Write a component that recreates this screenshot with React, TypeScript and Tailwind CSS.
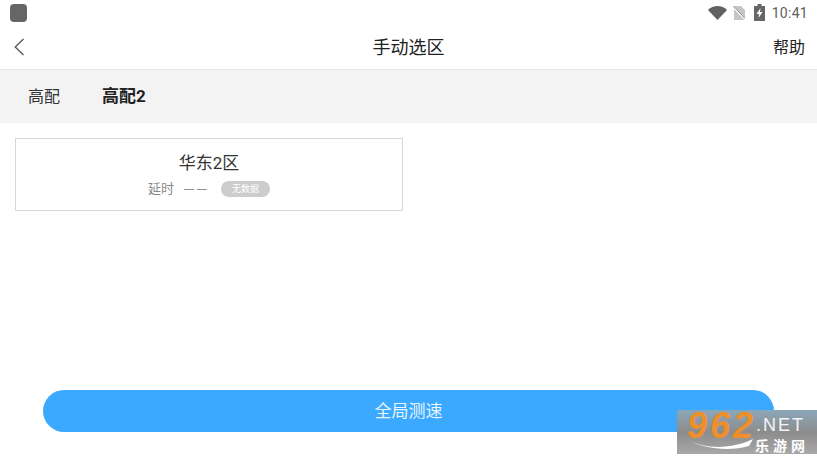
import React from "react";

export default function App() {
  return (
    <div className="relative flex h-[460px] w-[817px] flex-col overflow-hidden bg-white font-['Roboto','Noto_Sans_CJK_SC',sans-serif]">
      {/* status bar */}
      <div className="flex h-[25px] items-center justify-between pl-[10px] pr-[9px]">
        <div className="h-[18px] w-[17px] rounded-[4px] bg-[#666666]" />
        <div className="flex items-center">
          <svg width="19" height="14" viewBox="0 0 19 14" className="mr-[6px]">
            <path d="M0 4 C5 -1.2 14 -1.2 19 4 L9.5 14 Z" fill="#616161" />
          </svg>
          <svg width="12" height="14" viewBox="0 0 12 14" className="mr-[9px]">
            <path d="M1 0 H8 L12 4 V14 H1 Z" fill="#c6c6c6" />
            <path d="M0 0.5 L12 13.5" stroke="#ffffff" strokeWidth="1.6" />
            <path d="M0 -0.5 L12 12.5" stroke="#8a8a8a" strokeWidth="1" />
          </svg>
          <svg width="11" height="17" viewBox="0 0 11 17" className="mr-[7px]">
            <path d="M3.5 0 H7.5 V2 H11 V17 H0 V2 H3.5 Z" fill="#666666" />
            <path d="M6.5 4 L2.5 10 H5 L4.5 14 L8.5 8 H6 Z" fill="#ffffff" />
          </svg>
          <span className="pt-[1px] text-[14px] leading-none tracking-[0.3px] text-[#5f5f5f]">10:41</span>
        </div>
      </div>

      {/* header */}
      <div className="relative flex h-[45px] shrink-0 items-center justify-between border-b border-[#e6e6e6] pl-[14px] pr-[12px]">
        <svg width="10" height="18" viewBox="0 0 10 18" fill="none">
          <path d="M9.5 1 L1.2 9 L9.5 17" stroke="#555555" strokeWidth="1.3" />
        </svg>
        <span className="absolute left-0 right-0 pt-[1px] text-center text-[18px] text-[#222222]">手动选区</span>
        <span className="pt-[1px] text-[16px] text-[#222222]">帮助</span>
      </div>

      {/* tabs */}
      <div className="flex h-[53px] shrink-0 items-center bg-[#f3f3f3] pl-[28px]">
        <span className="text-[16px] text-[#333333]">高配</span>
        <span className="ml-[42px] text-[17px] font-bold text-[#222222]">高配2</span>
      </div>

      {/* card */}
      <div className="pl-[15px] pt-[15px]">
        <div className="flex h-[73px] w-[388px] flex-col items-center border border-[#d8d8d8] pt-[13px]">
          <div className="text-[17px] leading-[22px] text-[#333333]">华东2区</div>
          <div className="mt-[7px] flex items-center text-[13px] leading-[16px] text-[#888888]">
            <span>延时</span>
            <span className="ml-[10px] w-[24px] whitespace-nowrap font-['Liberation_Sans',sans-serif] text-[10px] text-[#777777]">— —</span>
            <span className="ml-[13px] flex h-[16px] w-[49px] items-center justify-center rounded-full bg-[#cccccc] text-[9px] text-white">
              无数据
            </span>
          </div>
        </div>
      </div>

      {/* button */}
      <div className="mt-auto px-[43px] pb-[28px]">
        <div className="flex h-[42px] w-[731px] items-center justify-center rounded-[21px] bg-[#3aa9ff] pt-[1px] text-[17px] text-[#e9f5ff]">
          全局测速
        </div>
      </div>

      {/* watermark */}
      <div className="absolute left-[677px] top-[410px] h-[44px] w-[140px] bg-gradient-to-b from-[#8ba7ba] via-[#8c8c8c] to-[#a8a8a8]">
        <div className="absolute left-[10px] top-[-2px] font-['Liberation_Sans',sans-serif] text-[36px] font-bold italic leading-[36px] tracking-[3px] text-[#ee8f2b]">
          962
        </div>
        <div className="absolute left-[79px] top-[5px] font-['Liberation_Sans',sans-serif] text-[18px] leading-[20px] tracking-[2px] text-[#f4f4f4]">
          .NET
        </div>
        <div className="absolute left-[78px] top-[28px] text-[14px] font-bold leading-[16px] tracking-[4px] text-white">
          乐游网
        </div>
        <svg width="70" height="14" viewBox="0 0 70 14" className="absolute left-[8px] top-[28px]">
          <path d="M1 1 C20 12 48 11 68 1 L64 8 C46 13 20 12 1 1 Z" fill="#ffffff" />
        </svg>
      </div>
    </div>
  );
}
